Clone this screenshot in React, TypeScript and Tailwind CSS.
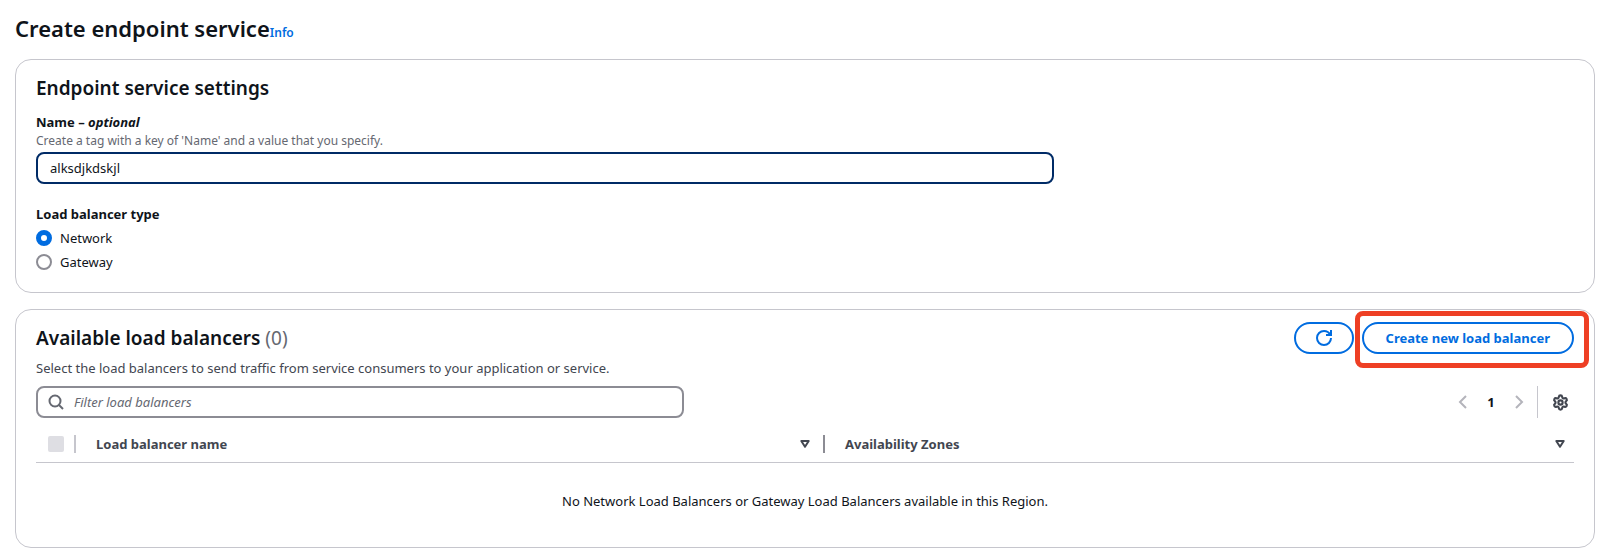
import { useState } from 'react';
import { Settings } from 'lucide-react';

const loadBalancerTypes = ['Network', 'Gateway'];

function RefreshIcon() {
  return (
    <svg width="16" height="16" viewBox="0 0 16 16" fill="none" stroke="currentColor" strokeWidth="2" aria-hidden="true">
      <path d="M15 8c0 3.87-3.13 7-7 7s-7-3.13-7-7 3.13-7 7-7c2.79 0 5.2 1.63 6.33 4" />
      <path d="M10 5h5V0" />
    </svg>
  );
}

function SearchIcon() {
  return (
    <svg width="16" height="16" viewBox="0 0 16 16" fill="none" stroke="currentColor" strokeWidth="2" aria-hidden="true">
      <circle cx="7" cy="7" r="5.5" />
      <path d="m15 15-4.5-4.5" />
    </svg>
  );
}

function AngleIcon({ direction }: { direction: 'left' | 'right' }) {
  return (
    <svg width="16" height="16" viewBox="0 0 16 16" fill="none" stroke="currentColor" strokeWidth="2" aria-hidden="true">
      <path d={direction === 'left' ? 'M11 2 5 8l6 6' : 'm5 2 6 6-6 6'} />
    </svg>
  );
}

function SortIcon() {
  return (
    <svg width="16" height="16" viewBox="0 0 16 16" fill="none" stroke="currentColor" strokeWidth="2" strokeLinejoin="round" aria-hidden="true">
      <path d="M4.3 5h7.4L8 10.8z" />
    </svg>
  );
}

function App() {
  const [name, setName] = useState('alksdjkdskjl');
  const [type, setType] = useState('Network');
  const [filter, setFilter] = useState('');

  return (
    <main className="bg-white pt-3 pr-[23px] pb-3 pl-[15px] font-['Noto_Sans',sans-serif] text-[13px] leading-5 text-[#0f141a]">
      <header className="flex items-baseline">
        <h1 className="text-[22px] leading-8 font-semibold">Create endpoint service</h1>
        <a href="#info" className="text-xs font-semibold text-[#006ce0]">Info</a>
      </header>

      <section className="mt-[15px] rounded-2xl border border-[#c6c6cd] px-5 pt-4 pb-5">
        <h2 className="text-[19px] leading-6 font-semibold">Endpoint service settings</h2>

        <div className="mt-3">
          <label htmlFor="service-name" className="block font-bold">
            Name – <i>optional</i>
          </label>
          <p className="text-xs leading-[18px] text-[#656871]">
            Create a tag with a key of 'Name' and a value that you specify.
          </p>
          <input
            id="service-name"
            type="text"
            value={name}
            onChange={(e) => setName(e.target.value)}
            className="mt-[2px] block h-8 w-[calc(66.67%-7px)] rounded-lg border-2 border-[#002b66] px-3 outline-none"
          />
        </div>

        <fieldset className="mt-5">
          <legend className="font-bold">Load balancer type</legend>
          <div className="mt-1 flex flex-col gap-1">
            {loadBalancerTypes.map((item) => (
              <label key={item} className="flex items-center gap-2">
                <input
                  type="radio"
                  name="load-balancer-type"
                  checked={type === item}
                  onChange={() => setType(item)}
                  className="size-4 appearance-none rounded-full border-2 border-[#8c8c94] bg-white checked:border-5 checked:border-[#006ce0]"
                />
                {item}
              </label>
            ))}
          </div>
        </fieldset>
      </section>

      <section className="mt-4 rounded-2xl border border-[#c6c6cd] px-5 pt-3 pb-9">
        <div className="flex items-center justify-between">
          <h2 className="text-[19px] leading-6 font-semibold">
            Available load balancers <span className="font-normal text-[#656871]">(0)</span>
          </h2>
          <div className="flex gap-2">
            <button
              type="button"
              aria-label="Refresh"
              className="flex h-8 w-15 items-center justify-center rounded-full border-2 border-[#006ce0] text-[#006ce0]"
            >
              <RefreshIcon />
            </button>
            <div className="relative">
              <button
                type="button"
                className="h-8 rounded-full border-2 border-[#006ce0] px-[22px] font-bold text-[#006ce0]"
              >
                Create new load balancer
              </button>
              <div className="pointer-events-none absolute -top-[11px] -right-[15px] -bottom-[14px] -left-[7px] rounded-lg border-5 border-[#ee3f24]" />
            </div>
          </div>
        </div>
        <p className="mt-1 text-[#424650]">
          Select the load balancers to send traffic from service consumers to your application or service.
        </p>

        <div className="mt-2 flex items-center justify-between">
          <label className="flex h-8 w-[648px] items-center gap-[10px] rounded-lg border-2 border-[#8c8c94] px-[10px] text-[#656871]">
            <SearchIcon />
            <input
              type="text"
              aria-label="Filter load balancers"
              placeholder="Filter load balancers"
              value={filter}
              onChange={(e) => setFilter(e.target.value)}
              className="flex-1 text-[#0f141a] outline-none placeholder:text-[#656871] placeholder:italic"
            />
          </label>
          <div className="flex items-center">
            <button type="button" aria-label="Previous page" className="text-[#b4b4bb]">
              <AngleIcon direction="left" />
            </button>
            <button type="button" className="w-10 font-bold">1</button>
            <button type="button" aria-label="Next page" className="text-[#b4b4bb]">
              <AngleIcon direction="right" />
            </button>
            <div className="ml-[10px] flex h-8 items-center border-l border-[#c6c6cd] pr-[5px] pl-[14px]">
              <button type="button" aria-label="Preferences" className="text-[#424650]">
                <Settings size={17} strokeWidth={3} />
              </button>
            </div>
          </div>
        </div>

        <table className="mt-2 w-full table-fixed">
          <thead className="text-[#424650]">
            <tr className="border-b border-[#c6c6cd]">
              <th className="w-10 p-0">
                <div className="flex h-9 items-center justify-between pl-3">
                  <input
                    type="checkbox"
                    aria-label="Select all"
                    disabled
                    className="size-4 appearance-none rounded-xs bg-[#dedee3]"
                  />
                  <span className="h-[18px] w-[2px] bg-[#c6c6cd]" />
                </div>
              </th>
              <th className="p-0 text-left font-bold">
                <div className="flex h-9 items-center pl-5">
                  <span className="flex-1">Load balancer name</span>
                  <SortIcon />
                  <span className="ml-[10px] h-[18px] w-[2px] bg-[#8c8c94]" />
                </div>
              </th>
              <th className="p-0 text-left font-bold">
                <div className="flex h-9 items-center pr-[6px] pl-5">
                  <span className="flex-1">Availability Zones</span>
                  <SortIcon />
                </div>
              </th>
            </tr>
          </thead>
          <tbody>
            <tr>
              <td colSpan={3} className="pt-7 pb-0 text-center">
                No Network Load Balancers or Gateway Load Balancers available in this Region.
              </td>
            </tr>
          </tbody>
        </table>
      </section>
    </main>
  );
}

export default App;
